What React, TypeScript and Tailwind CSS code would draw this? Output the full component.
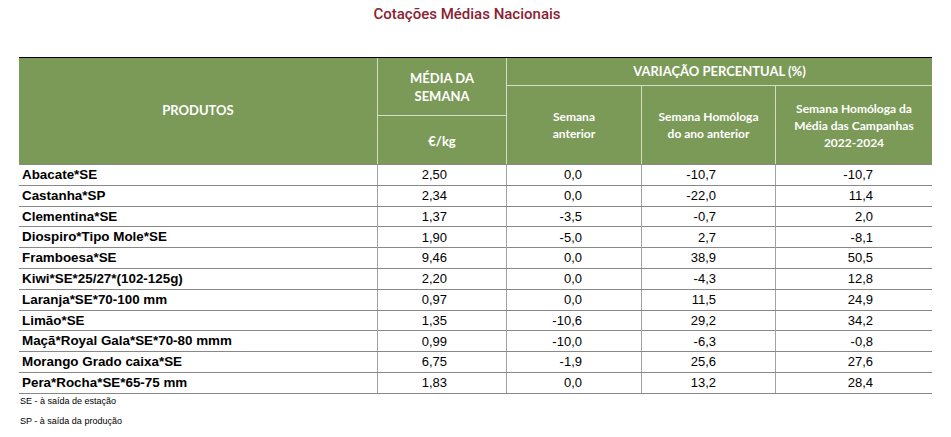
const rows: [string, string, string, string, string][] = [
  ["Abacate*SE", "2,50", "0,0", "-10,7", "-10,7"],
  ["Castanha*SP", "2,34", "0,0", "-22,0", "11,4"],
  ["Clementina*SE", "1,37", "-3,5", "-0,7", "2,0"],
  ["Diospiro*Tipo Mole*SE", "1,90", "-5,0", "2,7", "-8,1"],
  ["Framboesa*SE", "9,46", "0,0", "38,9", "50,5"],
  ["Kiwi*SE*25/27*(102-125g)", "2,20", "0,0", "-4,3", "12,8"],
  ["Laranja*SE*70-100 mm", "0,97", "0,0", "11,5", "24,9"],
  ["Limão*SE", "1,35", "-10,6", "29,2", "34,2"],
  ["Maçã*Royal Gala*SE*70-80 mmm", "0,99", "-10,0", "-6,3", "-0,8"],
  ["Morango Grado caixa*SE", "6,75", "-1,9", "25,6", "27,6"],
  ["Pera*Rocha*SE*65-75 mm", "1,83", "0,0", "13,2", "28,4"],
];

const cols = "grid grid-cols-[358px_129px_135px_134px_157px]";
const head = "flex items-center justify-center text-center text-white font-bold";

export default function App() {
  return (
    <div className="w-[951px] h-[437px] bg-white font-['Liberation_Sans',Arial,sans-serif] text-black">
      <div className="flex h-[28px] items-center justify-center pr-[17px] font-['Roboto',sans-serif] text-[15px] font-medium text-[#8a2232]">
        Cotações Médias Nacionais
      </div>

      <div className="ml-[19px] mt-[29px] w-[913px]">
        <div
          className={`${cols} grid-rows-[28px_30px_48px] border-t border-black bg-[#7b9a57] font-['Lato',sans-serif]`}
        >
          <div className={`${head} row-span-3 text-[13px]`}>PRODUTOS</div>
          <div className={`${head} row-span-2 border-b border-l border-[#d3dfc5] text-[13px] leading-[18px]`}>
            MÉDIA DA
            <br />
            SEMANA
          </div>
          <div className={`${head} col-span-3 border-b border-l border-[#d3dfc5] text-[13px]`}>
            VARIAÇÃO PERCENTUAL (%)
          </div>
          <div className={`${head} row-span-2 border-l border-[#d3dfc5] text-[12px] leading-[17px]`}>
            Semana
            <br />
            anterior
          </div>
          <div className={`${head} row-span-2 border-l border-[#d3dfc5] text-[12px] leading-[17px]`}>
            Semana Homóloga
            <br />
            do ano anterior
          </div>
          <div className={`${head} row-span-2 border-l border-[#d3dfc5] text-[12px] leading-[17px]`}>
            Semana Homóloga da
            <br />
            Média das Campanhas
            <br />
            2022-2024
          </div>
          <div className={`${head} border-l border-[#d3dfc5] pt-[4px] text-[13px]`}>€/kg</div>
        </div>

        <div className="border-t border-[#888888]">
          {rows.map((r) => (
            <div key={r[0]} className={`${cols} h-[20.8px] border-b border-[#888888]`}>
              <div className="flex items-center pl-[3px] text-[13.4px] font-bold">{r[0]}</div>
              {r.slice(1).map((v, i) => (
                <div
                  key={i}
                  className="flex items-center justify-end border-l border-[#a3a3a3] pr-[59px] text-[13px]"
                >
                  {v}
                </div>
              ))}
            </div>
          ))}
        </div>

        <div className="mt-[1px] pl-px text-[9px] leading-[12px]">SE - à saída de estação</div>
        <div className="mt-[8px] pl-px text-[9px] leading-[12px]">SP - à saída da produção</div>
      </div>
    </div>
  );
}
